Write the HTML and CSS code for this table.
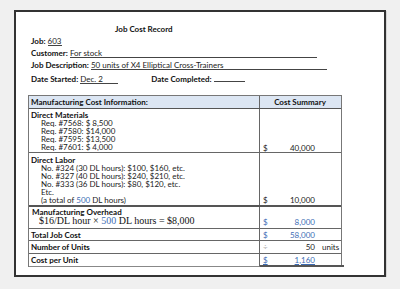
FILE: index.html
```html
<!DOCTYPE html>
<html>
<head>
<meta charset="utf-8">
<link rel="stylesheet" href="styles.css">
</head>
<body>
<div class="frame">
  <div class="title">Job Cost Record</div>
  <div class="info">
    <div class="line"><b>Job:</b> <span class="val v-job">603</span></div>
    <div class="line"><b>Customer:</b> <span class="val v-cust">For stock</span></div>
    <div class="line"><b>Job Description:</b> <span class="val v-desc">50 units of X4 Elliptical Cross-Trainers</span></div>
    <div class="line date"><b>Date Started:</b> <span class="val v-start">Dec. 2</span><b class="completed">Date Completed:</b> <span class="val v-comp"></span></div>
  </div>
  <div class="cost">
    <div class="row head">
      <div class="lc">Manufacturing Cost Information:</div>
      <div class="rc">Cost Summary</div>
    </div>
    <div class="row r-dm">
      <div class="lc">
        <div class="sec">Direct Materials</div>
        <div class="ind">Req. #7568: $ 8,500</div>
        <div class="ind">Req. #7580: $14,000</div>
        <div class="ind">Req. #7595: $13,500</div>
        <div class="ind">Req. #7601: $ 4,000</div>
      </div>
      <div class="rc"><div class="amt"><span>$</span><span class="num">40,000</span></div></div>
    </div>
    <div class="row r-dl">
      <div class="lc">
        <div class="sec">Direct Labor</div>
        <div class="ind">No. #324 (30 DL hours): $100, $160, etc.</div>
        <div class="ind">No. #327 (40 DL hours): $240, $210, etc.</div>
        <div class="ind">No. #333 (36 DL hours): $80, $120, etc.</div>
        <div class="ind">Etc.</div>
        <div class="ind">(a total of <span class="blue">500</span> DL hours)</div>
      </div>
      <div class="rc"><div class="amt"><span>$</span><span class="num">10,000</span></div></div>
    </div>
    <div class="row r-mo">
      <div class="lc">
        <div class="sec mo">Manufacturing Overhead</div>
        <div class="math">$16/DL hour × <span class="blue">500</span> DL hours = $8,000</div>
      </div>
      <div class="rc"><div class="amt blue"><span>$</span><span class="num">8,000</span></div></div>
    </div>
    <div class="row r-tot">
      <div class="lc sec">Total Job Cost</div>
      <div class="rc"><div class="amt blue"><span>$</span><span class="num">58,000</span></div></div>
    </div>
    <div class="row r-un">
      <div class="lc sec">Number of Units</div>
      <div class="rc"><div class="amt"><span class="gray">÷</span><span class="num">50</span><span class="units">units</span></div></div>
    </div>
    <div class="row r-cpu">
      <div class="lc sec">Cost per Unit</div>
      <div class="rc"><div class="amt blue"><span class="u">$</span><span class="num u">1,160</span></div></div>
    </div>
  </div>
</div>
</body>
</html>
```

FILE: styles.css
```css
html, body {
  margin: 0;
  padding: 0;
  background: #f0f0f0;
}
body {
  font-family: Lato, "Open Sans", sans-serif;
  font-size: 8px;
  color: #111;
}
*, *::before, *::after { box-sizing: border-box; }
.frame {
  margin: 10px 0 0 14px;
  width: 372px;
  height: 267px;
  background: #fff;
  border: 2px solid #333;
  box-shadow: 1px 1px 0 #d6d6d6;
  overflow: hidden;
}
.title {
  font-weight: bold;
  margin: 11px 0 0 99px;
  line-height: 12px;
  height: 12px;
}
.info {
  padding-left: 15px;
}
.line {
  height: 12px;
  line-height: 12px;
  white-space: nowrap;
}
.line.date { margin-top: 2px; }
.val {
  display: inline-block;
  border-bottom: 1px solid #444;
  line-height: 8px;
  height: 9px;
  color: #222;
}
.v-job { width: 14px; }
.v-cust { width: 247px; }
.v-desc { width: 236px; }
.v-start { width: 38px; }
.v-comp { width: 31px; }
.completed { margin-left: 33px; }

.cost {
  margin: 10px 0 0 12px;
  width: 314px;
  border: 1px solid #777;
  border-bottom: none;
  line-height: 8px;
}
.row {
  display: flex;
  border-bottom: 1px solid #666;
}
.lc {
  flex: 0 0 231px;
  border-right: 1px solid #666;
  padding-left: 2px;
}
.rc {
  flex: 1;
  display: flex;
  align-items: flex-end;
}
.head {
  height: 13px;
  background: #dce6f3;
  font-weight: bold;
  border-bottom-color: #555;
}
.head .lc, .head .rc {
  display: flex;
  align-items: center;
}
.head .rc { justify-content: center; padding-right: 1px; }
.sec { font-weight: bold; }
.ind { padding-left: 10px; color: #222; }
.r-dm { height: 44px; }
.r-dm .lc { padding-top: 2px; }
.r-dl { height: 54px; border-bottom: 2px solid #555; }
.r-dl .lc { padding-top: 3px; }
.r-dl .rc { padding-bottom: 1px; }
.r-mo { height: 22px; }
.r-mo .lc { padding-top: 1px; }
.r-mo .rc { padding-bottom: 2px; }
.mo { padding-left: 1px; }
.math {
  font-family: "Liberation Serif", "Times New Roman", serif;
  font-size: 10px;
  line-height: 8px;
  padding-left: 8px;
  padding-top: 1px;
  color: #111;
  white-space: nowrap;
}
.r-tot { height: 12px; }
.r-un { height: 13px; }
.r-tot .lc, .r-un .lc, .r-cpu .lc {
  display: flex;
  align-items: center;
}
.r-tot .rc, .r-un .rc, .r-cpu .rc { align-items: center; }
.r-cpu { height: 13px; border-bottom: none; }
.r-cpu .lc { border-bottom: 1px solid #888; }
.r-cpu .rc { border-bottom: 2px solid #555; }
.amt {
  display: flex;
  width: 84px;
  padding-left: 3px;
  color: #222;
  white-space: nowrap;
}
.amt .num { width: 49px; text-align: right; }
.amt > span:first-child { width: 3px; }
.units { margin-left: 7px; }
.blue, .amt.blue { color: #3e6db5; }
.gray { color: #aaa; }
.u { text-decoration: underline; text-underline-offset: 1px; }
```
